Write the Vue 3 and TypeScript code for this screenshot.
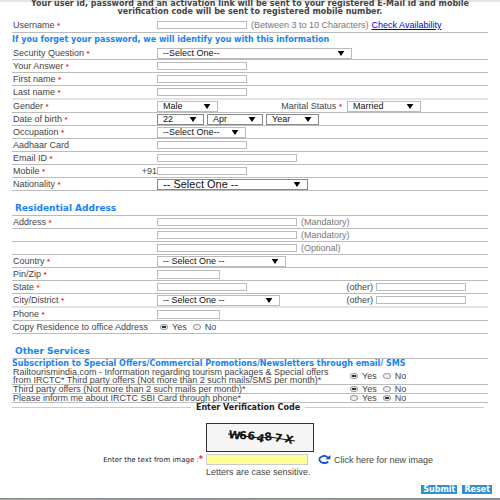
<script setup lang="ts">
import { reactive } from 'vue'

interface Offer {
  id: string
  text: string
  tall?: boolean
}

const form = reactive({
  copyAddress: 'Yes',
  offers: { tourism: 'Yes', thirdParty: 'Yes', card: 'No' } as Record<string, string>,
})

const offers: Offer[] = [
  {
    id: 'tourism',
    text: 'Railtourismindia.com - Information regarding tourism packages & Special offers from IRCTC* Third party offers (Not more than 2 such mails/SMS per month)*',
    tall: true,
  },
  { id: 'thirdParty', text: 'Third party offers (Not more than 2 such mails per month)*' },
  { id: 'card', text: 'Please inform me about IRCTC SBI Card through phone*' },
]

const choices = ['Yes', 'No']
</script>

<template>
  <main class="page">
    <form class="form" @submit.prevent>
      <p class="notice">
        Your user id, password and an activation link will be sent to your registered E-Mail id and mobile
        <br />verification code will be sent to registered mobile number.
      </p>

      <div class="row tall">
        <label for="username">Username <b>*</b></label>
        <div class="field">
          <input id="username" class="text medium" type="text" />
          <span class="hint">(Between 3 to 10 Characters)</span>
          <a href="#">Check Availability</a>
        </div>
      </div>

      <h2 class="strip lead">If you forget your password, we will identify you with this information</h2>

      <div class="row">
        <label for="question">Security Question <b>*</b></label>
        <div class="field">
          <span class="pick question">
            <select id="question"><option>--Select One--</option></select>
            <svg viewBox="0 0 8 6"><path d="M0 0H8L4 6Z" /></svg>
          </span>
        </div>
      </div>
      <div class="row">
        <label for="answer">Your Answer <b>*</b></label>
        <div class="field"><input id="answer" class="text medium" type="text" /></div>
      </div>
      <div class="row">
        <label for="first">First name <b>*</b></label>
        <div class="field"><input id="first" class="text medium" type="text" /></div>
      </div>
      <div class="row pale">
        <label for="last">Last name <b>*</b></label>
        <div class="field"><input id="last" class="text medium" type="text" /></div>
      </div>
      <div class="row">
        <label for="gender">Gender <b>*</b></label>
        <div class="field">
          <span class="pick gender">
            <select id="gender"><option>Male</option></select>
            <svg viewBox="0 0 8 6"><path d="M0 0H8L4 6Z" /></svg>
          </span>
          <div class="side marital">
            <label for="marital">Marital Status <b>*</b></label>
            <span class="pick status">
              <select id="marital"><option>Married</option></select>
              <svg viewBox="0 0 8 6"><path d="M0 0H8L4 6Z" /></svg>
            </span>
          </div>
        </div>
      </div>
      <div class="row">
        <label for="day">Date of birth <b>*</b></label>
        <div class="field">
          <span class="pick dark day">
            <select id="day"><option>22</option></select>
            <svg viewBox="0 0 8 6"><path d="M0 0H8L4 6Z" /></svg>
          </span>
          <span class="pick dark month">
            <select aria-label="Month"><option>Apr</option></select>
            <svg viewBox="0 0 8 6"><path d="M0 0H8L4 6Z" /></svg>
          </span>
          <span class="pick dark year">
            <select aria-label="Year"><option>Year</option></select>
            <svg viewBox="0 0 8 6"><path d="M0 0H8L4 6Z" /></svg>
          </span>
        </div>
      </div>
      <div class="row">
        <label for="occupation">Occupation <b>*</b></label>
        <div class="field">
          <span class="pick occupation">
            <select id="occupation"><option>--Select One--</option></select>
            <svg viewBox="0 0 8 6"><path d="M0 0H8L4 6Z" /></svg>
          </span>
        </div>
      </div>
      <div class="row">
        <label for="aadhaar">Aadhaar Card</label>
        <div class="field"><input id="aadhaar" class="text medium" type="text" /></div>
      </div>
      <div class="row">
        <label for="email">Email ID <b>*</b></label>
        <div class="field"><input id="email" class="text long" type="email" /></div>
      </div>
      <div class="row">
        <label for="mobile" class="split"><span>Mobile <b>*</b></span><span>+91</span></label>
        <div class="field"><input id="mobile" class="text medium" type="tel" /></div>
      </div>
      <div class="row">
        <label for="nationality">Nationality <b>*</b></label>
        <div class="field">
          <span class="pick dark nationality">
            <select id="nationality"><option>-- Select One --</option></select>
            <svg viewBox="0 0 8 6"><path d="M0 0H8L4 6Z" /></svg>
          </span>
        </div>
      </div>

      <h2 class="title">Residential Address</h2>

      <div class="row">
        <label for="address1">Address <b>*</b></label>
        <div class="field">
          <input id="address1" class="text long" type="text" />
          <span class="hint">(Mandatory)</span>
        </div>
      </div>
      <div class="row">
        <span></span>
        <div class="field">
          <input class="text long" type="text" aria-label="Address line 2" />
          <span class="hint">(Mandatory)</span>
        </div>
      </div>
      <div class="row">
        <span></span>
        <div class="field">
          <input class="text long" type="text" aria-label="Address line 3" />
          <span class="hint">(Optional)</span>
        </div>
      </div>
      <div class="row">
        <label for="country">Country <b>*</b></label>
        <div class="field">
          <span class="pick country">
            <select id="country"><option>-- Select One --</option></select>
            <svg viewBox="0 0 8 6"><path d="M0 0H8L4 6Z" /></svg>
          </span>
        </div>
      </div>
      <div class="row">
        <label for="pin">Pin/Zip <b>*</b></label>
        <div class="field"><input id="pin" class="text short" type="text" /></div>
      </div>
      <div class="row">
        <label for="state">State <b>*</b></label>
        <div class="field">
          <input id="state" class="text medium" type="text" />
          <div class="side other">
            <label for="state-other">(other)</label>
            <input id="state-other" class="text medium" type="text" />
          </div>
        </div>
      </div>
      <div class="row pale">
        <label for="city">City/District <b>*</b></label>
        <div class="field">
          <span class="pick city">
            <select id="city"><option>-- Select One --</option></select>
            <svg viewBox="0 0 8 6"><path d="M0 0H8L4 6Z" /></svg>
          </span>
          <div class="side other">
            <label for="city-other">(other)</label>
            <input id="city-other" class="text medium" type="text" />
          </div>
        </div>
      </div>
      <div class="row">
        <label for="phone">Phone <b>*</b></label>
        <div class="field"><input id="phone" class="text short" type="tel" /></div>
      </div>
      <div class="row" role="radiogroup" aria-labelledby="copy-label">
        <span id="copy-label">Copy Residence to office Address</span>
        <div class="field radios inset">
          <label v-for="choice in choices" :key="choice">
            <input v-model="form.copyAddress" type="radio" name="copy" :value="choice" />{{ choice }}
          </label>
        </div>
      </div>

      <h2 class="title">Other Services</h2>

      <h3 class="strip">
        Subscription to Special Offers/Commercial Promotions/Newsletters through email/ SMS
      </h3>
      <div
        v-for="offer in offers"
        :key="offer.id"
        class="offer"
        :class="{ double: offer.tall }"
        role="radiogroup"
        :aria-labelledby="offer.id"
      >
        <span :id="offer.id">{{ offer.text }}</span>
        <div class="radios">
          <label v-for="choice in choices" :key="choice">
            <input v-model="form.offers[offer.id]" type="radio" :name="offer.id" :value="choice" />{{ choice }}
          </label>
        </div>
      </div>

      <h3 class="divider">Enter Verification Code</h3>

      <div class="verify">
        <svg class="captcha" viewBox="0 0 108 29" role="img" aria-label="Verification code">
          <rect x="0.5" y="0.5" width="107" height="28" />
          <g>
            <text x="22" y="15" transform="rotate(8 22 15)">W</text>
            <text x="33" y="16" transform="rotate(3 33 16)">6</text>
            <text x="41" y="16" transform="rotate(7 41 16)">6</text>
            <text x="50" y="18" transform="rotate(14 50 18)">4</text>
            <text x="59" y="18" transform="rotate(-8 59 18)">8</text>
            <text x="68" y="18" transform="rotate(10 68 18)">7</text>
            <text x="78" y="19" transform="rotate(14 78 19)">X</text>
          </g>
          <path d="M22 11L34 12L44 14L55 15L64 14L76 16L89 18" />
        </svg>
        <label for="code" class="prompt">Enter the text from image :<b>*</b></label>
        <input id="code" class="code" type="text" />
        <a href="#" class="refresh">
          <svg viewBox="0 0 13 9">
            <path class="arc" d="M10.2 6.6C8.8 8.3 5.2 8.5 3 7C0.6 5.3 1 2.8 3.4 1.7C5.7 0.6 8.4 1 9.8 2.6" />
            <path class="tip" d="M12.4 0V4.2H7.4Z" />
          </svg>
          Click here for new image
        </a>
        <span class="note">Letters are case sensitive.</span>
      </div>

      <div class="actions">
        <button type="submit">Submit</button>
        <button type="reset">Reset</button>
      </div>
    </form>
    <div class="backdrop"></div>
  </main>
</template>

<style>
body {
  background: #fff;
}
</style>

<style scoped>
.page {
  border-top: 2px solid #e4e4e4;
  color: #444;
  font: 9px/10px 'Liberation Sans', Arial, sans-serif;
}

.form {
  padding: 0 12px;
}

.notice,
.strip,
.title,
.divider,
.prompt,
button {
  font-family: 'DejaVu Sans', Verdana, sans-serif;
}

.notice {
  height: 18px;
  margin: -2px 0 0;
  font-size: 8px;
  line-height: 8px;
  font-weight: bold;
  text-align: center;
  white-space: nowrap;
}

.row {
  display: grid;
  grid-template-columns: 144px 1fr;
  align-items: center;
  box-sizing: border-box;
  height: 13px;
  padding-left: 1px;
  border-bottom: 1px solid #bbb;
  white-space: nowrap;
}

.row.tall {
  height: 15px;
}

.row.pale {
  height: 14px;
  border-bottom: 2px solid #e4e4e4;
}

b {
  color: #f22;
  font-size: 8px;
}

.field,
.side {
  display: flex;
  align-items: center;
  gap: 3px;
}

.side {
  margin-left: auto;
}

.marital {
  margin-right: 67px;
  gap: 5px;
}

.other {
  margin-right: 22px;
}

.split {
  display: flex;
  justify-content: space-between;
}

.hint {
  margin-left: 1px;
  color: #777;
}

a {
  color: #00e;
}

input,
select,
button {
  box-sizing: border-box;
  margin: 0;
  padding: 0;
  border-radius: 0;
}

input,
select {
  font: inherit;
}

.text {
  height: 8px;
  border: 1px solid #bbb;
  background: #fff;
}

.medium {
  width: 90px;
}

.long {
  width: 140px;
}

.short {
  width: 63px;
  height: 9px;
}

.pick {
  display: grid;
  align-items: center;
}

.pick > * {
  grid-area: 1 / 1;
}

.pick select {
  appearance: none;
  width: 100%;
  height: 11px;
  padding-left: 5px;
  border: 1px solid #bbb;
  background: #fff;
  color: #111;
  line-height: 9px;
}

.pick.dark select {
  border-color: #888;
}

.pick svg {
  justify-self: end;
  width: 8px;
  height: 5px;
  margin-right: 7px;
  pointer-events: none;
}

.question {
  width: 195px;
}

.gender {
  width: 61px;
}

.status {
  width: 74px;
}

.day {
  width: 47px;
}

.month {
  width: 56px;
}

.year {
  width: 53px;
}

.occupation {
  width: 89px;
}

.nationality {
  width: 151px;
  font-size: 11px;
}

.country {
  width: 129px;
}

.city {
  width: 123px;
}

.strip {
  margin: 0;
  color: #1484f5;
  font-size: 8px;
  line-height: 9px;
  white-space: nowrap;
}

.lead {
  line-height: 14px;
}

.title {
  box-sizing: border-box;
  height: 25px;
  margin: 0;
  padding: 12px 0 0 3px;
  border-bottom: 1px solid #bbb;
  color: #1484f5;
  font-size: 9px;
  line-height: 11px;
}

.radios {
  display: flex;
  gap: 6px;
}

.radios.inset {
  gap: 6px;
  padding-left: 3px;
}

.radios label {
  display: flex;
  align-items: center;
  gap: 4px;
}

.radios input {
  appearance: none;
  width: 8px;
  height: 6px;
  border: 1px solid #999;
  border-radius: 50%;
  background: #eee;
}

.radios input:checked {
  background: radial-gradient(ellipse at center, #333 0 40%, #eee 55%);
}

.offer {
  display: grid;
  grid-template-columns: 322px 1fr;
  align-items: center;
  column-gap: 15px;
  box-sizing: border-box;
  height: 9px;
  padding-left: 1px;
  border-bottom: 1px solid #bbb;
  line-height: 8px;
}

.offer.double {
  height: 17px;
}

.divider {
  display: flex;
  align-items: center;
  gap: 5px;
  margin: 0 4px 0 0;
  color: #222;
  font-size: 8px;
  line-height: 9px;
}

.divider::before,
.divider::after {
  content: '';
  flex: 1;
  height: 1px;
  background: #ccc;
}

.verify {
  display: grid;
  grid-template-columns: 191px 102px 1fr;
  grid-template-areas:
    '. image image'
    'prompt code refresh'
    '. note note';
  align-items: center;
  column-gap: 3px;
  padding-top: 11px;
}

.captcha {
  grid-area: image;
  width: 108px;
  height: 29px;
}

.captcha rect {
  fill: #f5f5f5;
  stroke: #333;
}

.captcha text {
  fill: #111;
  font: bold 11px 'DejaVu Sans', sans-serif;
}

.captcha path {
  fill: none;
  stroke: #111;
}

.prompt {
  grid-area: prompt;
  justify-self: end;
  color: #222;
  font-size: 7px;
  white-space: nowrap;
}

.code {
  grid-area: code;
  height: 11px;
  margin: 2px 0;
  border: 1px solid #ccc;
  background: #ffff99;
}

.refresh {
  grid-area: refresh;
  display: flex;
  align-items: center;
  gap: 3px;
  padding-left: 7px;
  color: #444;
  text-decoration: none;
}

.refresh svg {
  width: 13px;
  height: 9px;
}

.arc {
  fill: none;
  stroke: #1550c8;
  stroke-width: 1.8;
}

.tip {
  fill: #1550c8;
}

.note {
  grid-area: note;
}

.actions {
  display: flex;
  justify-content: flex-end;
  gap: 5px;
  margin-right: -4px;
  padding: 8px 0 4px;
}

button {
  height: 9px;
  padding: 0 2px;
  border: 0;
  background: #2f8fd0;
  color: #fff;
  font-size: 8px;
  line-height: 9px;
  font-weight: bold;
}

.backdrop {
  height: 2px;
  border-top: 1px solid #888;
  background: linear-gradient(90deg, #b5aaa2, #a394a4 30%, #aba09b 60%, #9d8f98);
}
</style>
